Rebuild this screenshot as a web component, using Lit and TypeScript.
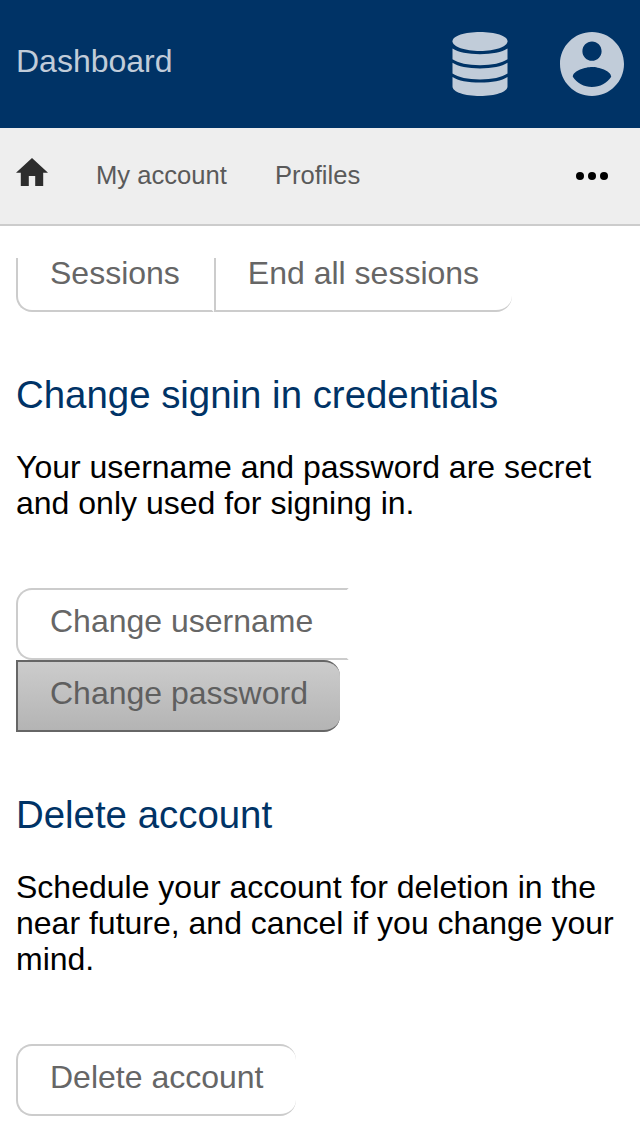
import { LitElement, html, css } from "lit";
import { customElement } from "lit/decorators.js";

@customElement("app-root")
export class AppRoot extends LitElement {
  static styles = css`
    :host {
      display: flex;
      flex-direction: column;
      height: 1136px;
      overflow: hidden;
      background: #fff;
      color: #000;
      font: 32px/36px "Liberation Sans", Arial, sans-serif;
    }
    .header {
      display: flex;
      flex: none;
      align-items: center;
      height: 128px;
      padding: 0 16px;
      box-sizing: border-box;
      background: #036;
      color: #c1ccd9;
    }
    .title {
      flex: 1;
      padding-bottom: 6px;
    }
    .db {
      width: 56px;
      height: 64px;
      margin-right: 52px;
    }
    .user {
      width: 64px;
      height: 64px;
    }
    svg {
      display: block;
      fill: currentColor;
    }
    .nav {
      display: flex;
      flex: none;
      align-items: center;
      height: 98px;
      box-sizing: border-box;
      padding: 0 32px 0 16px;
      border-bottom: 2px solid #ccc;
      background: #eee;
      color: #5a5a5a;
      font-size: 25.6px;
      line-height: 30px;
    }
    .home {
      width: 32px;
      height: 28px;
      margin: 0 48px 8px 0;
      color: #2d2d2d;
    }
    .item {
      margin: 0 48px 2px 0;
    }
    .more {
      width: 32px;
      height: 8px;
      margin-left: auto;
      color: #000;
    }
    .content {
      flex: 1;
      min-height: 0;
      margin-top: 32px;
      padding: 0 16px;
      overflow: hidden;
    }
    .group {
      display: flex;
      flex-wrap: wrap;
    }
    .button {
      box-sizing: border-box;
      height: 72px;
      padding: 13px 32px 0;
      border: 2px solid #ccc;
      border-right-color: #fff;
      color: #666;
      white-space: nowrap;
    }
    .button:first-child {
      border-radius: 16px 0 0 16px;
    }
    .button:last-child {
      padding-right: 33px;
      border-right: 0;
      border-radius: 0 16px 16px 0;
    }
    .button:only-child {
      border-radius: 16px;
    }
    .first .button {
      height: 54px;
      padding-top: 0;
      border-top: 0;
      line-height: 30px;
    }
    .first .button:first-child {
      border-radius: 0 0 0 16px;
    }
    .first .button:last-child {
      border-radius: 0 0 16px 0;
    }
    .button.wide {
      padding-right: 34px;
    }
    .button.active {
      padding-right: 32px;
      border-color: #666;
      background: linear-gradient(#ccc, #b4b4b4);
      color: #5f5f5f;
    }
    h2 {
      margin: 61px 0 32px;
      color: #036;
      font-size: 38.4px;
      font-weight: 400;
      line-height: 44px;
    }
    p {
      margin: 0 0 67px;
    }
  `;

  render() {
    return html`
      <header class="header">
        <div class="title">Dashboard</div>
        <svg class="db" viewBox="0 0 56 64">
          <path d="M28 0C43 0 55.500 3.800 55.500 9.200C55.500 14.600 43 19 28 19S0.500 14.600 0.500 9.200C0.500 3.800 13 0 28 0z" />
          <path d="M0.500 16.500C6 20.200 16 22.200 28 22.200S50 20.200 55.500 16.500V27.300C50 31.200 40 33.200 28 33.200S6 31.200 0.500 27.300z" />
          <path d="M0.500 30.700C6 34.400 16 36.400 28 36.400S50 34.400 55.500 30.700V41.500C50 45.400 40 47.400 28 47.400S6 45.400 0.500 41.500z" />
          <path d="M0.500 44.900C6 48.600 16 50.600 28 50.600S50 48.600 55.500 44.900V54.500C55.500 60 43 64 28 64S0.500 60 0.500 54.500z" />
        </svg>
        <svg class="user" viewBox="2 2 20 20">
          <path d="M12 2C6.480 2 2 6.480 2 12s4.480 10 10 10 10-4.480 10-10S17.520 2 12 2zm0 3c1.660 0 3 1.340 3 3s-1.340 3-3 3-3-1.340-3-3 1.340-3 3-3zm0 14.200c-2.500 0-4.710-1.280-6-3.220.03-1.990 4-3.080 6-3.080 1.990 0 5.970 1.090 6 3.080-1.290 1.940-3.500 3.220-6 3.220z" />
        </svg>
      </header>
      <nav class="nav">
        <svg class="home" viewBox="2 3 20 17" preserveAspectRatio="none">
          <path d="M10 20v-6h4v6h5v-8h3L12 3 2 12h3v8z" />
        </svg>
        <span class="item">My account</span>
        <span class="item">Profiles</span>
        <svg class="more" viewBox="0 0 32 8">
          <circle cx="4" cy="4" r="4" />
          <circle cx="16" cy="4" r="4" />
          <circle cx="28" cy="4" r="4" />
        </svg>
      </nav>
      <main class="content">
        <div class="group first">
          <div class="button">Sessions</div>
          <div class="button">End all sessions</div>
        </div>
        <h2>Change signin in credentials</h2>
        <p>Your username and password are secret and only used for signing in.</p>
        <div class="group">
          <div class="button wide">Change username</div>
          <div class="button active">Change password</div>
        </div>
        <h2>Delete account</h2>
        <p>Schedule your account for deletion in the near future, and cancel if you change your mind.</p>
        <div class="group">
          <div class="button">Delete account</div>
        </div>
      </main>
    `;
  }
}
